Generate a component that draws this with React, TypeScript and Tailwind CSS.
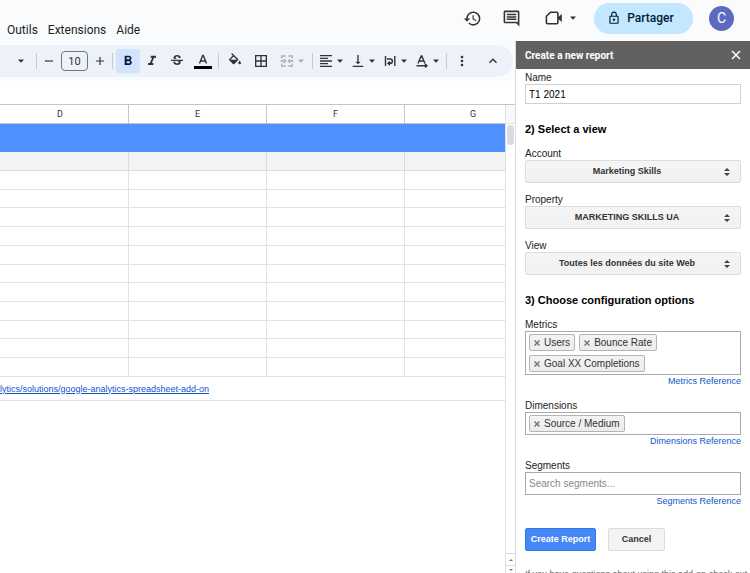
import React from "react";
import {
  MdAdd,
  MdBorderAll,
  MdFormatAlignLeft,
  MdFormatBold,
  MdFormatItalic,
  MdHistory,
  MdKeyboardArrowUp,
  MdMoreVert,
  MdOutlineInsertComment,
  MdOutlineLock,
  MdRemove,
  MdStrikethroughS,
  MdVerticalAlignBottom,
} from "react-icons/md";

const ui = "font-['Roboto',sans-serif]";

function Caret({ muted = false }: { muted?: boolean }) {
  return (
    <svg viewBox="0 0 12 12" className={`size-3 ${muted ? "text-[#a9adb2]" : "text-[#333]"}`} aria-hidden="true">
      <path d="M3 4.5h6L6 7.8z" fill="currentColor" />
    </svg>
  );
}

function Divider() {
  return <span className="h-4 w-px shrink-0 bg-[#c7cbd1]" />;
}

function Tool({ label, children, muted = false }: { label: string; children: React.ReactNode; muted?: boolean }) {
  return (
    <button
      type="button"
      aria-label={label}
      className={`flex h-6 shrink-0 items-center ${muted ? "text-[#a9adb2]" : "text-[#333]"}`}
    >
      {children}
    </button>
  );
}

function MeetIcon() {
  return (
    <svg viewBox="0 0 18 18" className="size-[18px]" fill="none" stroke="currentColor" strokeWidth="1.6" aria-hidden="true">
      <path d="M5.5 3.2h6.2q1.2 0 1.2 1.2v9.2q0 1.2-1.2 1.2H2.6q-1.2 0-1.2-1.2V7.3z" strokeLinejoin="round" />
      <path d="M13 8.2 16.8 5v8L13 9.8z" fill="currentColor" stroke="none" />
    </svg>
  );
}

function FillIcon() {
  return (
    <svg viewBox="0 0 24 24" className="size-4" fill="currentColor" aria-hidden="true">
      <path d="M16.56 8.94 7.62 0 6.21 1.41l2.38 2.38-5.15 5.15a1.49 1.49 0 0 0 0 2.12l5.5 5.5c.29.29.68.44 1.06.44s.77-.15 1.06-.44l5.5-5.5c.59-.58.59-1.53 0-2.12zM5.21 10 10 5.21 14.79 10zM19 11.5s-2 2.17-2 3.5a2 2 0 1 0 4 0c0-1.33-2-3.5-2-3.5z" />
    </svg>
  );
}

function MergeIcon() {
  return (
    <svg viewBox="0 0 16 16" className="size-4" fill="none" stroke="currentColor" strokeWidth="1.3" aria-hidden="true">
      <path d="M6.500 3H2.700v2.500M9.500 3h3.800v2.500M6.500 13H2.700v-2.500M9.500 13h3.800v-2.500M1.500 8H6M14.500 8H10" />
      <path d="m4.800 6.200 1.800 1.800-1.800 1.800M11.200 6.200 9.400 8l1.800 1.800" />
    </svg>
  );
}

function WrapIcon() {
  return (
    <svg viewBox="0 0 16 16" className="size-4" fill="none" stroke="currentColor" strokeWidth="1.4" aria-hidden="true">
      <path d="M3.500 3v10M12.800 3v10M5 6h3.200a2.100 2.100 0 0 1 0 4.300H6.500M8 8.400l-2 1.900 2 1.900" />
    </svg>
  );
}

function RotateIcon() {
  return (
    <svg viewBox="0 0 16 16" className="size-4" fill="none" stroke="currentColor" strokeWidth="1.4" aria-hidden="true">
      <path d="M4 10.500 7.200 3h.6L11 10.500M5.200 8h4.600M2.500 12.800h10M11 11l2 1.800-2 1.800" />
    </svg>
  );
}

function Toolbar() {
  return (
    <div className="mt-1 mr-[2px] flex h-8 items-center rounded-r-full bg-[#edf2fa] pl-[15px]">
      <Tool label="Police"><Caret /></Tool>
      <div className="ml-[9px] flex items-center">
        <Divider />
        <div className="ml-[5px] flex items-center gap-[5px]">
          <Tool label="Réduire la taille"><MdRemove className="size-[14px]" /></Tool>
          <input
            aria-label="Taille de police"
            defaultValue="10"
            className={`h-5 w-[27px] rounded-[4px] border border-[#747775] text-center text-[11px] text-[#333] ${ui}`}
          />
          <Tool label="Augmenter la taille"><MdAdd className="size-[14px]" /></Tool>
        </div>
      </div>
      <div className="ml-[5px] flex items-center">
        <Divider />
        <button
          type="button"
          aria-label="Gras"
          className="ml-[3px] flex h-6 w-6 items-center justify-center rounded-[3px] bg-[#d3e3fd] text-[#041e49]"
        >
          <MdFormatBold className="size-4" />
        </button>
        <div className="ml-1 flex items-center gap-[9px]">
          <Tool label="Italique"><MdFormatItalic className="size-4" /></Tool>
          <Tool label="Barré"><MdStrikethroughS className="size-4" /></Tool>
          <button type="button" aria-label="Couleur du texte" className="flex h-6 w-[18px] flex-col items-center justify-center text-[#333]">
            <svg viewBox="0 0 18 16" className="h-4 w-[18px]" aria-hidden="true">
              <path d="M5.500 10.500 8.700 2.500h.6l3.200 8M6.700 8h4.600" fill="none" stroke="currentColor" strokeWidth="1.4" />
              <path d="M0 13h18v3H0z" fill="#000" />
            </svg>
          </button>
        </div>
      </div>
      <div className="ml-[6px] flex items-center">
        <Divider />
        <div className="ml-2 flex items-center gap-[10px]">
          <Tool label="Couleur de remplissage"><FillIcon /></Tool>
          <Tool label="Bordures"><MdBorderAll className="size-4" /></Tool>
          <Tool label="Fusionner les cellules" muted><MergeIcon /><Caret muted /></Tool>
        </div>
      </div>
      <div className="ml-[5px] flex items-center">
        <Divider />
        <div className="ml-[5px] flex items-center gap-1">
          <Tool label="Alignement horizontal"><MdFormatAlignLeft className="size-4" /><Caret /></Tool>
          <Tool label="Alignement vertical"><MdVerticalAlignBottom className="size-4" /><Caret /></Tool>
          <Tool label="Retour à la ligne"><WrapIcon /><Caret /></Tool>
          <Tool label="Rotation du texte"><RotateIcon /><Caret /></Tool>
          <Divider />
        </div>
      </div>
      <div className="ml-[7px] flex flex-1 items-center justify-between pr-3">
        <Tool label="Plus"><MdMoreVert className="size-4" /></Tool>
        <Tool label="Masquer les menus"><MdKeyboardArrowUp className="size-4" /></Tool>
      </div>
    </div>
  );
}

const columns = ["D", "E", "F", "G"];
const emptyRows = Array.from({ length: 11 }, (_, i) => i);

function Sheet() {
  return (
    <div className="mt-[27px] flex min-h-0 flex-1 border-t border-[#c4c7c5] bg-white">
      <div className="min-w-0 flex-1 overflow-hidden">
        <table className="h-[296px] w-[542px] table-fixed border-separate border-spacing-0 font-['Liberation_Sans',Arial,sans-serif]">
          <colgroup>
            <col className="w-[129px]" />
            <col className="w-[138px]" />
            <col className="w-[138px]" />
            <col className="w-[137px]" />
          </colgroup>
          <thead>
            <tr className="h-[19px]">
              {columns.map((c) => (
                <th
                  key={c}
                  scope="col"
                  className={`border-r border-b border-[#c4c7c5] p-0 text-[9px] leading-3 font-normal text-[#333] first:pr-2 ${ui}`}
                >
                  {c}
                </th>
              ))}
            </tr>
          </thead>
          <tbody>
            <tr className="h-7">
              <td colSpan={4} className="bg-[#4d90fe] p-0" />
            </tr>
            <tr className="h-[19px]">
              {columns.map((c) => (
                <td key={c} className="border-r border-b border-[#dcdcdc] bg-[#f3f3f3] p-0" />
              ))}
            </tr>
            {emptyRows.map((r) => (
              <tr key={r}>
                {columns.map((c) => (
                  <td key={c} className="border-r border-b border-[#e1e1e1] p-0" />
                ))}
              </tr>
            ))}
            <tr className="h-6">
              <td colSpan={4} className="border-b border-[#e1e1e1] p-0 text-[9px] leading-3 whitespace-nowrap">
                <a href="#addon" className="text-[#1155cc] underline">
                  lytics/solutions/google-analytics-spreadsheet-add-on
                </a>
              </td>
            </tr>
          </tbody>
        </table>
      </div>
      <div className="flex w-[10px] flex-col border-l border-[#e1e1e1]">
        <div className="h-[19px] border-b border-[#e1e1e1] bg-[#f8f9fa]" />
        <div className="mx-px mt-px h-5 rounded-[3px] bg-[#dadce0]" />
        <div className="mt-auto flex h-3 items-center justify-center border-t border-[#dcdcdc]">
          <span className="border-x-2 border-b-2 border-x-transparent border-b-[#777]" />
        </div>
        <div className="flex h-2 items-center justify-center border-t border-[#dcdcdc]">
          <span className="border-x-2 border-t-2 border-x-transparent border-t-[#777]" />
        </div>
      </div>
    </div>
  );
}

function SelectField({ id, label, value }: { id: string; label: string; value: string }) {
  return (
    <div className="mb-[9px]">
      <label htmlFor={id} className="block h-[14px] leading-4">{label}</label>
      <div className="grid items-center">
        <select
          id={id}
          defaultValue={value}
          className="col-start-1 row-start-1 h-[23px] w-full appearance-none rounded-[2px] border border-[#dcdcdc] bg-linear-to-b from-[#f5f5f5] to-[#f1f1f1] pr-3 text-center text-[9px] font-bold text-[#333]"
        >
          <option>{value}</option>
        </select>
        <svg viewBox="0 0 8 10" className="pointer-events-none col-start-1 row-start-1 mr-[10px] h-[10px] w-2 justify-self-end" fill="#444" aria-hidden="true">
          <path d="M1 4 4 1l3 3zM1 6l3 3 3-3z" />
        </svg>
      </div>
    </div>
  );
}

function Tag({ text }: { text: string }) {
  return (
    <span className="flex h-[17px] items-center gap-1 rounded-[2px] border border-[#b4b4b4] bg-linear-to-b from-[#f3f3f3] to-[#ececec] px-1 leading-3 text-[#333]">
      <button type="button" aria-label={`Remove ${text}`}>
        <svg viewBox="0 0 6 6" className="size-[6px]" stroke="#777" strokeWidth="1.5" aria-hidden="true">
          <path d="M0.5 0.5L5.5 5.5M5.5 0.5L0.5 5.5" />
        </svg>
      </button>
      {text}
    </span>
  );
}

function TagField({ id, label, tags, placeholder }: { id: string; label: string; tags: string[]; placeholder?: string }) {
  return (
    <div className="mb-[9px]">
      <label htmlFor={id} className="block h-[14px] leading-4">{label}</label>
      <div className="flex flex-wrap gap-x-1 gap-y-1 border border-[#aaa] bg-white px-[3px] py-[2px]">
        {tags.map((t) => (
          <Tag key={t} text={t} />
        ))}
        <input
          id={id}
          placeholder={placeholder}
          className="h-[17px] w-4 min-w-0 flex-1 bg-transparent outline-none placeholder:text-[#888]"
        />
      </div>
      <div className="flex h-[14px] items-center justify-end text-[9px]">
        <a href={`#${id}-reference`} className="text-[#1155cc]">{label} Reference</a>
      </div>
    </div>
  );
}

function ReportPanel() {
  return (
    <aside className="flex w-[235px] shrink-0 flex-col overflow-hidden border-l border-[#dcdcdc] bg-white">
      <div className={`flex h-7 shrink-0 items-center justify-between bg-[#616161] pr-2 pl-[9px] text-white ${ui}`}>
        <h1 className="text-[10px] font-bold">Create a new report</h1>
        <button type="button" aria-label="Close">
          <svg viewBox="0 0 12 12" className="size-3" stroke="currentColor" strokeWidth="1.5" aria-hidden="true">
            <path d="m2 2 8 8M10 2l-8 8" />
          </svg>
        </button>
      </div>
      <form className="shrink-0 pr-[9px] pl-[9px] font-['Liberation_Sans',Arial,sans-serif] text-[10px] text-[#222]">
        <label htmlFor="name" className="mt-px block h-[14px] leading-4">Name</label>
        <input id="name" defaultValue="T1 2021" className="block h-5 w-full border border-[#d0d0d0] px-[3px] text-black" />
        <h2 className="mt-[18px] mb-[10px] text-[11px] leading-[14px] font-bold text-black">2) Select a view</h2>
        <SelectField id="account" label="Account" value="Marketing Skills" />
        <SelectField id="property" label="Property" value="MARKETING SKILLS UA" />
        <SelectField id="view" label="View" value="Toutes les données du site Web" />
        <h2 className="mt-[18px] mb-[10px] text-[11px] leading-[14px] font-bold text-black">3) Choose configuration options</h2>
        <TagField id="metrics" label="Metrics" tags={["Users", "Bounce Rate", "Goal XX Completions"]} />
        <TagField id="dimensions" label="Dimensions" tags={["Source / Medium"]} />
        <TagField id="segments" label="Segments" tags={[]} placeholder="Search segments..." />
        <div className="mt-[19px] flex gap-3 text-[9px] font-bold">
          <button type="button" className="h-[23px] w-[71px] rounded-[2px] border border-[#3079ed] bg-[#4688f5] text-white">Create Report</button>
          <button type="button" className="h-[23px] w-[57px] rounded-[2px] border border-[#dcdcdc] bg-[#f3f3f3] text-[#333]">Cancel</button>
        </div>
        <p className="mt-[17px] text-[9px] leading-3 whitespace-nowrap text-[#666]">If you have questions about using this add-on check out</p>
      </form>
    </aside>
  );
}

export default function App() {
  return (
    <div className="flex h-screen flex-col overflow-hidden bg-[#f9fbfd]">
      <header className={`flex h-[41px] shrink-0 items-start justify-between pr-4 pl-[7px] text-[#222] ${ui}`}>
        <nav className="mt-[22px] flex gap-[10px] text-[12px] leading-4">
          <button type="button">Outils</button>
          <button type="button">Extensions</button>
          <button type="button">Aide</button>
        </nav>
        <div className="mt-[2px] flex h-8 items-center text-[#333]">
          <button type="button" aria-label="Historique" className="mr-5"><MdHistory className="size-[19px]" /></button>
          <button type="button" aria-label="Commentaires" className="mr-6"><MdOutlineInsertComment className="size-[19px]" /></button>
          <button type="button" aria-label="Visioconférence" className="mr-[15px] flex items-center gap-1"><MeetIcon /><Caret /></button>
          <button type="button" className="mr-4 flex h-[31px] w-[99px] items-center justify-center gap-[6px] rounded-full bg-[#c2e7ff] pr-[6px] text-[12px] font-medium text-[#001d35]">
            <MdOutlineLock className="size-[14px]" />
            Partager
          </button>
          <button type="button" aria-label="Compte" className="flex size-[25px] items-center justify-center rounded-full bg-[#5c6bc0] text-[14px] text-white">C</button>
        </div>
      </header>
      <div className="flex min-h-0 flex-1">
        <main className="flex min-w-0 flex-1 flex-col bg-linear-to-b from-[#f9fbfd] from-[40px] to-white to-[40px]">
          <Toolbar />
          <Sheet />
        </main>
        <ReportPanel />
      </div>
    </div>
  );
}
